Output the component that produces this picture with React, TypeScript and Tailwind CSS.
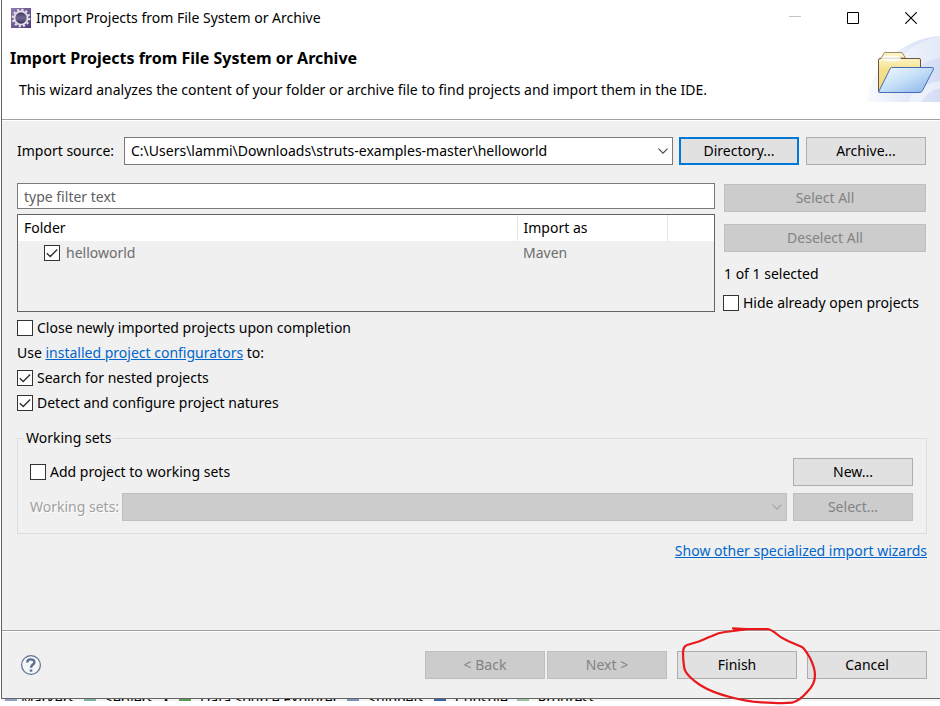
import type { InputHTMLAttributes, ReactNode } from "react";

const buttonBase = "h-7 shrink-0 border text-center leading-5";
const buttonOn = "border-[#adadad] bg-[#e1e1e1] text-black";
const buttonOff = "border-[#bfbfbf] bg-[#cccccc] text-[#838383]";

function PushButton({
  children,
  disabled = false,
  focused = false,
  width = "w-[120px]",
}: {
  children: ReactNode;
  disabled?: boolean;
  focused?: boolean;
  width?: string;
}) {
  const tone = disabled
    ? buttonOff
    : focused
      ? "border-2 border-[#0078d7] bg-[#e1e1e1] text-black"
      : buttonOn;
  return (
    <button type="button" disabled={disabled} className={`${buttonBase} ${width} ${tone}`}>
      {children}
    </button>
  );
}

function TickBox(props: InputHTMLAttributes<HTMLInputElement>) {
  return (
    <span className="grid size-4 shrink-0">
      <input
        type="checkbox"
        {...props}
        className="peer col-start-1 row-start-1 size-4 appearance-none border border-[#333333] bg-white"
      />
      <svg
        viewBox="0 0 16 16"
        className="pointer-events-none col-start-1 row-start-1 hidden size-4 peer-checked:block"
        fill="none"
        stroke="#333333"
        strokeWidth="1.4"
        aria-hidden="true"
      >
        <path d="M2.8 8.2 6.2 11.6 13.2 4.6" />
      </svg>
    </span>
  );
}

function CheckRow({ id, label, checked = false }: { id: string; label: string; checked?: boolean }) {
  return (
    <div className="flex h-[25px] items-center gap-1">
      <TickBox id={id} defaultChecked={checked} />
      <label htmlFor={id}>{label}</label>
    </div>
  );
}

function Chevron({ color }: { color: string }) {
  return (
    <svg
      viewBox="0 0 10 6"
      className="pointer-events-none absolute top-1/2 right-[5px] h-[6px] w-[10px] -translate-y-1/2"
      fill="none"
      stroke={color}
      strokeWidth="1.1"
      aria-hidden="true"
    >
      <path d="M.5.6 5 5.1 9.5.6" />
    </svg>
  );
}

function EclipseIcon() {
  return (
    <svg viewBox="0 0 20 20" className="size-5" aria-hidden="true">
      <defs>
        <linearGradient id="eclipse-bg" x1="0" y1="0" x2="1" y2="1">
          <stop offset="0" stopColor="#8d7bb0" />
          <stop offset="1" stopColor="#4d3a7c" />
        </linearGradient>
        <linearGradient id="eclipse-core" x1="0" y1="0" x2="0" y2="1">
          <stop offset="0" stopColor="#3b3561" />
          <stop offset=".5" stopColor="#71688f" />
          <stop offset="1" stopColor="#332b56" />
        </linearGradient>
      </defs>
      <rect width="20" height="20" fill="url(#eclipse-bg)" />
      <circle cx="10" cy="10" r="8.3" fill="none" stroke="#e6e3ea" strokeWidth="2" strokeDasharray="2.2 2.15" />
      <circle cx="10" cy="10" r="6.6" fill="url(#eclipse-core)" stroke="#e6e3ea" strokeWidth="1.8" />
    </svg>
  );
}

function FolderBanner() {
  return (
    <svg viewBox="0 0 75 66" className="h-[66px] w-[75px]" aria-hidden="true">
      <defs>
        <linearGradient id="banner-sky" x1="0" y1="0" x2="1" y2="0">
          <stop offset="0" stopColor="#f8fafe" />
          <stop offset="1" stopColor="#d3ddf3" />
        </linearGradient>
        <linearGradient id="folder-back" x1="0" y1="0" x2="0" y2="1">
          <stop offset="0" stopColor="#fbf3c4" />
          <stop offset=".35" stopColor="#f3e08a" />
          <stop offset="1" stopColor="#f0d878" />
        </linearGradient>
        <linearGradient id="folder-front" x1="0" y1="0" x2="1" y2="1">
          <stop offset="0" stopColor="#f4fcff" />
          <stop offset=".5" stopColor="#c3def7" />
          <stop offset="1" stopColor="#86b0e6" />
        </linearGradient>
      </defs>
      <path d="M2 66C4 30 40 2 75 0V66Z" fill="url(#banner-sky)" />
      <path d="M38 19C50 8 64 2 75 0V22C62 24 56 30 48 34Z" fill="#ffffff" opacity=".35" />
      <path d="M46 60C56 50 66 46 75 45V52C66 54 60 60 56 66H44Z" fill="#ffffff" opacity=".45" />
      <path d="M16 22 19.500 16.500H37L40.500 22Z" fill="#fbf3bf" stroke="#a58a63" />
      <path d="M13.500 56V24Q13.500 22.500 15 22.500H54Q55.500 22.500 55.500 24V56Z" fill="url(#folder-back)" stroke="#6f5146" />
      <ellipse cx="26" cy="22.500" rx="10" ry="3" fill="#ffffff" opacity=".8" />
      <path d="M26.500 31.500H67.500Q69 31.500 68.500 33L57.500 54.500Q56.500 56.500 55 56.500H14.500Q13.500 56.500 14 55L25 33Q25.500 31.500 26.500 31.500Z" fill="url(#folder-front)" stroke="#4a68b8" />
    </svg>
  );
}

function RedCircle() {
  return (
    <svg
      viewBox="677 625 143 81"
      className="pointer-events-none absolute -top-[26px] left-0 h-[81px] w-[143px] max-w-none"
      fill="none"
      stroke="#e8191c"
      strokeWidth="2.2"
      strokeLinecap="round"
      strokeLinejoin="round"
      aria-hidden="true"
    >
      <path d="M733 628.300 746 629.200 768 629C772 630 774 632 776 633.500 781 638 784 639 788 641L802 647C805 649 807 653 810 658 813 664 815 669 815 675 815 681 812 687 808 691 803 697 799 701 792 702.700 780 704 765 702.500 753 701.700 745 700.500 737 699 730 697 720 694.500 708 690 700 685 694 681 692 679 690 677 686 673 684 670 684 666 683 660 683 656 683 652 683.500 648 684 646 687 645L698 641.800C703 640 707 637.500 712 636 716 634 720 632.500 725 632L746 629.500 734 629.500" />
    </svg>
  );
}

function Minus() {
  return (
    <svg viewBox="0 0 12 12" className="size-3" stroke="#c4c4c4" aria-hidden="true">
      <path d="M0 4.500H12" />
    </svg>
  );
}

const behindTabs = [
  { name: "Markers", gap: "w-5", dot: "bg-[#8f9fc4]" },
  { name: "Servers", gap: "w-[30px]", dot: "bg-[#7fae9a]" },
  { name: "×", gap: "w-2", dot: "bg-transparent" },
  { name: "Data Source Explorer", gap: "w-[30px]", dot: "bg-[#5d9a5a]" },
  { name: "Snippets", gap: "w-[30px]", dot: "bg-[#7b93bb]" },
  { name: "Console", gap: "w-[30px]", dot: "bg-[#3f62a5]" },
  { name: "Progress", gap: "w-[30px]", dot: "bg-[#9cc3a0]" },
];

export default function App() {
  return (
    <div className="flex min-h-screen flex-col bg-white pb-[5px] pl-px font-['Noto_Sans','Open_Sans',sans-serif] text-[14px] leading-5 text-black">
      <main className="flex flex-1 flex-col border-b border-l border-[#646464] bg-[#f0f0f0]">
        <div className="bg-white">
          <div className="flex h-9 items-center pl-[9px]">
            <EclipseIcon />
            <span className="ml-[5px] flex-1">Import Projects from File System or Archive</span>
            <button type="button" aria-label="Minimize" disabled className="grid h-9 w-[58px] place-items-center">
              <Minus />
            </button>
            <button type="button" aria-label="Maximize" className="grid h-9 w-[58px] place-items-center">
              <svg viewBox="0 0 12 12" className="size-3" fill="none" stroke="#000" aria-hidden="true">
                <path d="M.5.5h11v11H.5Z" />
              </svg>
            </button>
            <button type="button" aria-label="Close" className="grid h-9 w-[58px] place-items-center">
              <svg viewBox="0 0 12 12" className="size-3" fill="none" stroke="#000" strokeWidth="1.2" aria-hidden="true">
                <path d="m.3.3 11.400 11.400M11.700.3.3 11.700" />
              </svg>
            </button>
          </div>
          <header className="flex h-[83px] justify-between pl-2">
            <div className="pt-3">
              <h1 className="text-[16px] leading-5 font-bold">Import Projects from File System or Archive</h1>
              <p className="mt-3 pl-[9px]">
                This wizard analyzes the content of your folder or archive file to find projects and import them in the
                IDE.
              </p>
            </div>
            <FolderBanner />
          </header>
        </div>

        <section className="flex-1 border-t border-[#a0a0a0]">
          <div className="border-t border-white pt-4 pr-[13px] pl-[15px]">
            <div className="flex items-center pr-px">
              <label htmlFor="source" className="w-[107px] shrink-0">
                Import source:
              </label>
              <div className="relative mr-1.5 flex-1">
                <select
                  id="source"
                  className="block h-7 w-full appearance-none border border-[#7a7a7a] bg-white pr-5 pl-1.5 leading-5"
                >
                  <option>C:\Users\lammi\Downloads\struts-examples-master\helloworld</option>
                </select>
                <Chevron color="#444444" />
              </div>
              <PushButton focused>Directory...</PushButton>
              <div className="ml-[7px] flex">
                <PushButton>Archive...</PushButton>
              </div>
            </div>

            <div className="mt-[18px] flex gap-2">
              <div className="flex-1">
                <input
                  type="text"
                  aria-label="Filter"
                  placeholder="type filter text"
                  className="block h-[26px] w-full border border-[#7a7a7a] bg-white px-1.5 placeholder:text-[#5f5f5f] placeholder:opacity-100"
                />
                <div className="mt-[5px] h-[98px] border border-[#646464]">
                  <table className="w-full table-fixed border-collapse text-left">
                    <thead className="bg-white">
                      <tr className="h-[26px]">
                        <th className="border-r border-[#e5e5e5] px-1.5 py-0 font-normal">Folder</th>
                        <th className="w-[150px] border-r border-[#e5e5e5] px-1.5 py-0 font-normal">Import as</th>
                        <th className="w-[47px] p-0" aria-label="Spacer" />
                      </tr>
                    </thead>
                    <tbody className="text-[#6d6d6d]">
                      <tr className="h-6">
                        <td className="py-0 pl-[26px]">
                          <div className="flex items-center gap-1.5">
                            <TickBox id="helloworld" defaultChecked />
                            <label htmlFor="helloworld">helloworld</label>
                          </div>
                        </td>
                        <td className="px-1.5 py-0">Maven</td>
                        <td className="p-0" />
                      </tr>
                    </tbody>
                  </table>
                </div>
              </div>
              <div className="flex w-[204px] shrink-0 flex-col pt-px">
                <div className="flex flex-col gap-3 pl-px">
                  <PushButton disabled width="w-[202px]">
                    Select All
                  </PushButton>
                  <PushButton disabled width="w-[202px]">
                    Deselect All
                  </PushButton>
                  <p>1 of 1 selected</p>
                </div>
                <div className="mt-1.5 whitespace-nowrap">
                  <CheckRow id="hide-open" label="Hide already open projects" />
                </div>
              </div>
            </div>

            <div>
              <CheckRow id="close-new" label="Close newly imported projects upon completion" />
              <p className="leading-[25px]">
                Use{" "}
                <a href="#configurators" className="text-[#0066cc] underline">
                  installed project configurators
                </a>{" "}
                to:
              </p>
              <CheckRow id="nested" label="Search for nested projects" checked />
              <CheckRow id="natures" label="Detect and configure project natures" checked />
            </div>

            <fieldset className="mt-[13px] border border-[#dcdcdc] pr-[13px] pb-3 pl-3">
              <legend className="-ml-1.5 px-0.5 leading-5">Working sets</legend>
              <div className="mt-2.5 flex items-center justify-between">
                <CheckRow id="add-ws" label="Add project to working sets" />
                <PushButton>New...</PushButton>
              </div>
              <div className="mt-[7px] flex items-center">
                <label htmlFor="ws" className="w-[92px] shrink-0 text-[#a0a0a0] [text-shadow:1px_1px_0_#ffffff]">
                  Working sets:
                </label>
                <div className="relative mr-1.5 flex-1">
                  <select
                    id="ws"
                    disabled
                    className="block h-7 w-full appearance-none border border-[#bfbfbf] bg-[#cccccc] opacity-100"
                  />
                  <Chevron color="#a3a3a3" />
                </div>
                <PushButton disabled>Select...</PushButton>
              </div>
            </fieldset>

            <p className="mt-[7px] text-right">
              <a href="#wizards" className="text-[#0066cc] underline">
                Show other specialized import wizards
              </a>
            </p>
          </div>
        </section>

        <footer className="border-t border-[#a0a0a0]">
          <div className="flex h-[67px] items-center border-t border-white pr-[13px] pl-[19px]">
            <button type="button" aria-label="Help" className="size-5">
              <svg viewBox="0 0 20 20" className="size-5" fill="none" stroke="#5b6f92" aria-hidden="true">
                <circle cx="10" cy="10" r="9.400" fill="#f4f5f6" strokeWidth="1.2" />
                <path d="M6.200 7.400C6.200 3.400 13.400 3.400 13.400 7.200 13.400 9.600 10 9.600 10 12.800" strokeWidth="2.400" />
                <path d="M10 14.500V16.700" strokeWidth="2.600" />
              </svg>
            </button>
            <div className="ml-auto flex gap-2.5">
              <div className="flex gap-0.5">
                <PushButton disabled>&lt; Back</PushButton>
                <PushButton disabled>Next &gt;</PushButton>
              </div>
              <div className="relative flex">
                <PushButton>Finish</PushButton>
                <RedCircle />
              </div>
              <PushButton>Cancel</PushButton>
            </div>
          </div>
        </footer>
      </main>

      <div className="flex h-[2px] items-center overflow-hidden bg-[#f4f4f4] text-[14px] whitespace-nowrap">
        {behindTabs.map((tab) => (
          <span key={tab.name} className="flex shrink-0 items-center">
            <span className={`flex justify-center ${tab.gap}`}>
              <span className={`block h-[2px] w-3 ${tab.dot}`} />
            </span>
            {tab.name}
          </span>
        ))}
      </div>
    </div>
  );
}
